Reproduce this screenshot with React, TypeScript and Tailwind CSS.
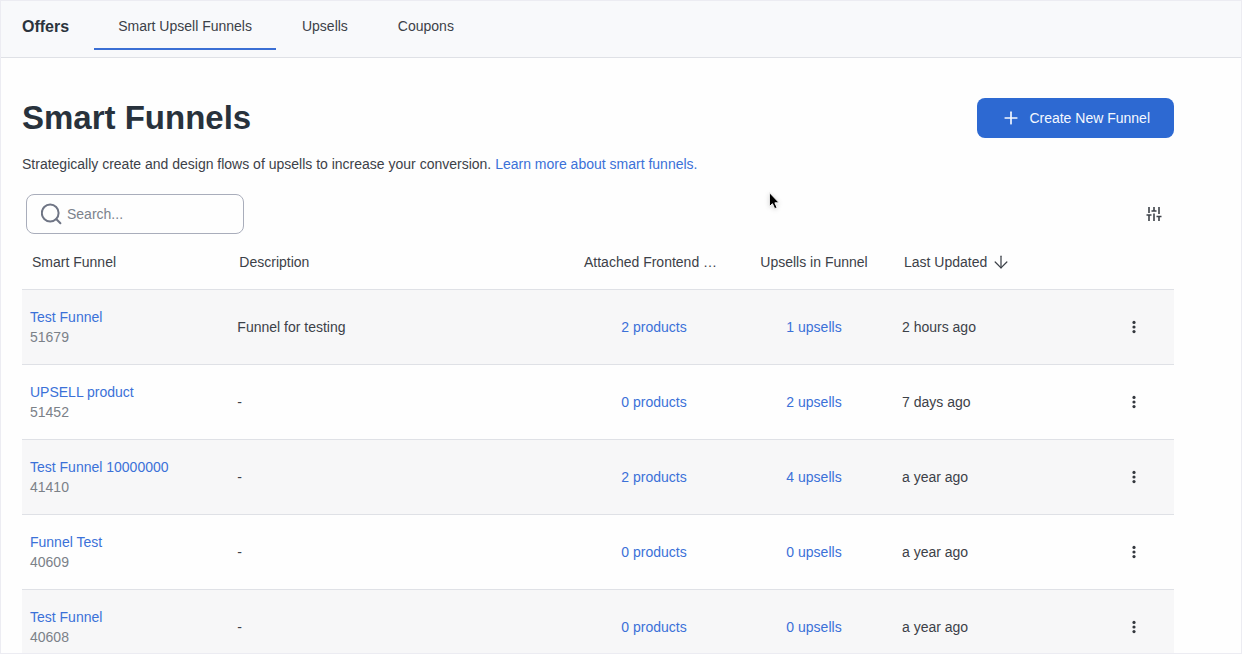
import { useState } from 'react';
import { ArrowDown, Plus } from 'lucide-react';

interface Funnel {
  id: number;
  name: string;
  description: string;
  products: number;
  upsells: number;
  updated: string;
}

const tabs = ['Smart Upsell Funnels', 'Upsells', 'Coupons'];

const funnels: Funnel[] = [
  { id: 51679, name: 'Test Funnel', description: 'Funnel for testing', products: 2, upsells: 1, updated: '2 hours ago' },
  { id: 51452, name: 'UPSELL product', description: '-', products: 0, upsells: 2, updated: '7 days ago' },
  { id: 41410, name: 'Test Funnel 10000000', description: '-', products: 2, upsells: 4, updated: 'a year ago' },
  { id: 40609, name: 'Funnel Test', description: '-', products: 0, upsells: 0, updated: 'a year ago' },
  { id: 40608, name: 'Test Funnel', description: '-', products: 0, upsells: 0, updated: 'a year ago' },
];

function SearchIcon() {
  return (
    <svg
      className="shrink-0"
      width="22"
      height="22"
      viewBox="0 0 22 22"
      fill="none"
      stroke="currentColor"
      strokeWidth="2"
      strokeLinecap="round"
    >
      <circle cx="9.2" cy="10" r="8.4" />
      <path d="M15.4 16.2L19.4 20.2" />
    </svg>
  );
}

function FiltersIcon() {
  return (
    <svg width="16" height="16" viewBox="0 0 16 16" fill="none" stroke="currentColor" strokeWidth="1.6">
      <path d="M3 1v6M3 9v6M0.5 9h5M8 1v4M8 7.5V15M5.5 5h5M13 1v7M13 10.5V15M10.5 10.5h5" />
    </svg>
  );
}

function DotsIcon() {
  return (
    <svg width="16" height="16" viewBox="0 0 16 16" fill="currentColor">
      <circle cx="8" cy="3.4" r="1.6" />
      <circle cx="8" cy="8" r="1.6" />
      <circle cx="8" cy="12.6" r="1.6" />
    </svg>
  );
}

function Cursor() {
  return (
    <svg
      className="pointer-events-none absolute left-[767px] top-[190px] drop-shadow-sm"
      width="13"
      height="19"
      viewBox="0 0 14 20"
    >
      <path d="M1.5 1.5v15l3.3-3 2.4 5.3 2.6-1.1-2.4-5.2h4.6z" fill="#000" stroke="#fff" strokeWidth="1" />
    </svg>
  );
}

export default function App() {
  const [activeTab, setActiveTab] = useState(tabs[0]);
  const [query, setQuery] = useState('');

  const visible = funnels.filter((f) => f.name.toLowerCase().includes(query.toLowerCase()));

  return (
    <div className="relative flex h-screen flex-col border border-[#ececf2] bg-[#fefefe] font-['Liberation_Sans',Arial,sans-serif] text-sm text-[#3c4148]">
      <header className="flex h-[57px] shrink-0 items-start gap-[25px] border-b border-[#dfe1e6] bg-[#f8f9fb] pl-[21px]">
        <span className="pt-4 text-base leading-5 font-bold text-[#2b333c]">Offers</span>
        <nav className="flex gap-0.5">
          {tabs.map((tab) => (
            <a
              key={tab}
              href="#"
              onClick={() => setActiveTab(tab)}
              className={`border-b-2 px-6 pt-[15px] pb-3 leading-5 ${
                tab === activeTab ? 'border-[#3b6fd4]' : 'border-transparent'
              }`}
            >
              {tab}
            </a>
          ))}
        </nav>
      </header>

      <main className="flex-1 overflow-y-auto pt-10 pr-[67px] pl-[21px] [scrollbar-width:none]">
        <div className="flex items-center justify-between">
          <h1 className="text-[33px] leading-10 font-bold text-[#28323c]">Smart Funnels</h1>
          <button className="flex h-10 items-center gap-2 rounded-lg bg-[#2d69d2] px-6 text-[#f4f8ff]">
            <Plus size={20} strokeWidth={2} />
            Create New Funnel
          </button>
        </div>

        <p className="mt-4 leading-5">
          Strategically create and design flows of upsells to increase your conversion.{' '}
          <a href="#" className="text-[#3b71d8]">
            Learn more about smart funnels.
          </a>
        </p>

        <div className="mt-5 flex items-center justify-between pr-3 pl-1">
          <label className="flex h-10 w-[218px] items-center gap-1 rounded-lg border border-[#a9adbb] px-3.5 text-[#6f7585]">
            <SearchIcon />
            <input
              type="text"
              aria-label="Search"
              placeholder="Search..."
              value={query}
              onChange={(e) => setQuery(e.target.value)}
              className="w-full min-w-0 outline-none placeholder:text-[#7c828c]"
            />
          </label>
          <button aria-label="Filters" className="text-[#3c4148]">
            <FiltersIcon />
          </button>
        </div>

        <table className="w-full table-fixed border-separate border-spacing-0">
          <colgroup>
            <col className="w-[18%]" />
            <col />
            <col className="w-40" />
            <col className="w-40" />
            <col className="w-[200px]" />
            <col className="w-20" />
          </colgroup>
          <thead>
            <tr className="h-14 text-left *:border-b *:border-[#dfe1e6] *:px-2.5 *:font-normal">
              <th>Smart Funnel</th>
              <th>Description</th>
              <th>Attached Frontend …</th>
              <th className="text-center">Upsells in Funnel</th>
              <th>
                <button className="flex items-center gap-1">
                  Last Updated
                  <ArrowDown size={20} strokeWidth={1.5} />
                </button>
              </th>
              <th aria-label="Actions" />
            </tr>
          </thead>
          <tbody>
            {visible.map((funnel) => (
              <tr key={funnel.id} className="h-[75px] odd:bg-[#f7f7f8] *:border-b *:border-[#dfe1e6] *:px-2">
                <td className="leading-5">
                  <a href="#" className="block text-[#3b71d8]">
                    {funnel.name}
                  </a>
                  <span className="block text-[#7b8188]">{funnel.id}</span>
                </td>
                <td>{funnel.description}</td>
                <td className="text-center">
                  <a href="#" className="text-[#3b71d8]">
                    {funnel.products} products
                  </a>
                </td>
                <td className="text-center">
                  <a href="#" className="text-[#3b71d8]">
                    {funnel.upsells} upsells
                  </a>
                </td>
                <td>{funnel.updated}</td>
                <td>
                  <button aria-label="Funnel actions" className="mx-auto block text-[#34383e]">
                    <DotsIcon />
                  </button>
                </td>
              </tr>
            ))}
          </tbody>
        </table>
      </main>

      <Cursor />
    </div>
  );
}
